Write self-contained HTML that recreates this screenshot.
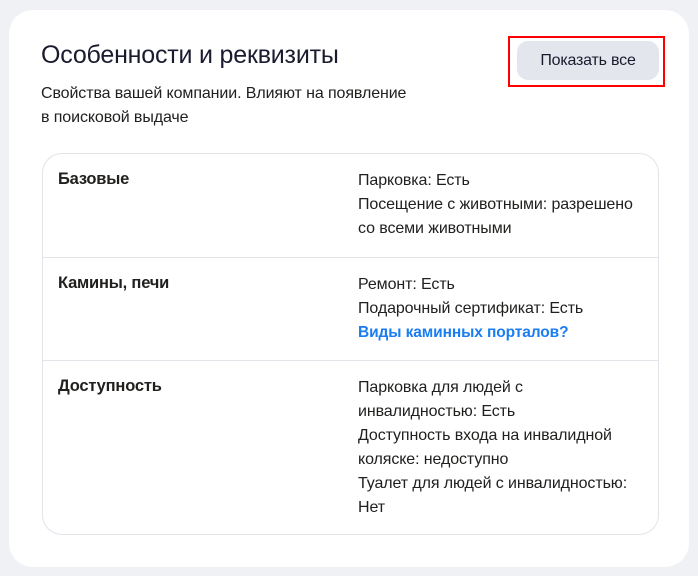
<!DOCTYPE html>
<html><head><meta charset="utf-8"><style>
*{margin:0;padding:0;box-sizing:border-box}
body{width:698px;height:576px;background:#f0f1f5;font-family:"Liberation Sans",sans-serif;color:#21201f;position:relative;overflow:hidden}
.card{position:absolute;left:9px;top:10px;width:680px;height:557px;background:#fff;border-radius:24px}
.title{position:absolute;left:41px;top:41px;font-size:25px;letter-spacing:-0.2px;color:#1a1b2e}
.sub{position:absolute;left:41px;top:82px;font-size:16px;line-height:24px;letter-spacing:-0.1px;color:#21201f}
.red{position:absolute;left:508px;top:36px;width:157px;height:51px;border:2px solid #f00}
.btn{position:absolute;left:517px;top:41px;width:142px;height:39px;background:#e4e6ed;border-radius:11px;font-size:16px;letter-spacing:-0.2px;text-align:center;line-height:39px;color:#1a1b2e}
.box{position:absolute;left:42px;top:153px;width:617px;height:382px;border:1px solid #e2e4ea;border-radius:20px}
.row{position:absolute;left:0;width:615px;border-top:1px solid #e2e4ea}
.k{position:absolute;left:15px;top:16px;font-size:16.5px;font-weight:bold;letter-spacing:-0.2px}
.v{position:absolute;left:315px;top:15px;width:300px;font-size:16px;line-height:24px;letter-spacing:-0.1px;color:#21201f}
a{color:#1a7ef2;font-weight:bold;text-decoration:none;font-size:15.5px}
</style></head><body>
<div class="card"></div>
<div class="title">Особенности и реквизиты</div>
<div class="sub">Свойства вашей компании. Влияют на появление<br>в поисковой выдаче</div>
<div class="red"></div>
<div class="btn">Показать все</div>
<div class="box">
 <div class="row" style="top:0;border-top:none;height:103px"><div class="k">Базовые</div><div class="v">Парковка: Есть<br>Посещение с животными: разрешено<br>со всеми животными</div></div>
 <div class="row" style="top:103px;height:103px"><div class="k">Камины, печи</div><div class="v">Ремонт: Есть<br>Подарочный сертификат: Есть<br><a>Виды каминных порталов?</a></div></div>
 <div class="row" style="top:206px;height:170px"><div class="k">Доступность</div><div class="v">Парковка для людей с<br>инвалидностью: Есть<br>Доступность входа на инвалидной<br>коляске: недоступно<br>Туалет для людей с инвалидностью:<br>Нет</div></div>
</div>
</body></html>
